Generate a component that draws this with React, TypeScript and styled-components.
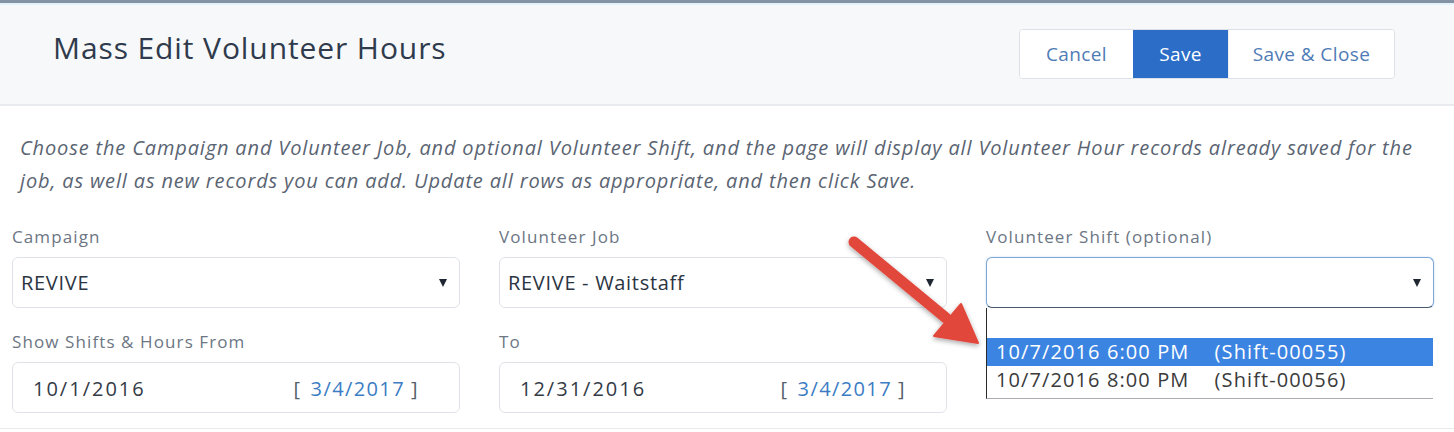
import React from "react";
import styled, { createGlobalStyle } from "styled-components";

const GlobalStyle = createGlobalStyle`
  html, body {
    margin: 0;
    padding: 0;
    background: #ffffff;
    font-family: "Open Sans", "Liberation Sans", sans-serif;
  }
`;

const Page = styled.div`
  position: relative;
  width: 1454px;
  height: 432px;
  overflow: hidden;
  background: #ffffff;
`;

const TopRule = styled.div`
  height: 3px;
  background: #8393a3;
  border-bottom: 2px solid #e3f1fb;
`;

const Header = styled.header`
  display: flex;
  align-items: flex-start;
  justify-content: space-between;
  height: 99px;
  padding: 0 59px 0 53px;
  background: #f7f8fa;
  border-bottom: 2px solid #e8eaee;
`;

const Title = styled.h1`
  margin: 0;
  padding-top: 25px;
  font-size: 30px;
  font-weight: 400;
  line-height: 36px;
  letter-spacing: 0.9px;
  color: #2f3b4c;
`;

const ButtonGroup = styled.div`
  display: flex;
  margin-top: 24px;
  border: 1px solid #dde1e7;
  border-radius: 4px;
  background: #ffffff;
  overflow: hidden;
`;

const GroupButton = styled.button<{ $primary?: boolean; $width: number }>`
  width: ${(p) => p.$width}px;
  height: 48px;
  padding: 0;
  border: none;
  border-left: ${(p) => (p.$primary ? "none" : "1px solid #eef0f3")};
  font-family: inherit;
  font-size: 19px;
  letter-spacing: 0.4px;
  color: ${(p) => (p.$primary ? "#ffffff" : "#4f7cb6")};
  background: ${(p) => (p.$primary ? "#2b6dc7" : "#ffffff")};
  &:first-child {
    border-left: none;
  }
`;

const Intro = styled.p`
  margin: 0;
  padding: 25px 20px 0 20px;
  font-size: 20px;
  font-style: italic;
  line-height: 33px;
  letter-spacing: 0.85px;
  white-space: nowrap;
  color: #5a6472;
`;

const Form = styled.div`
  display: grid;
  grid-template-columns: repeat(3, 448px);
  column-gap: 39px;
  row-gap: 23px;
  padding: 29px 0 15px 12px;
  border-bottom: 1px solid #e7e9ec;
`;

const Field = styled.div`
  position: relative;
  display: flex;
  flex-direction: column;
  gap: 9px;
`;

const Label = styled.label`
  font-size: 17px;
  line-height: 22px;
  letter-spacing: 1.1px;
  color: #6c7684;
`;

const Box = styled.div<{ $focused?: boolean }>`
  display: flex;
  align-items: center;
  box-sizing: border-box;
  height: 51px;
  padding: 0 12px 0 8px;
  border: 1px solid ${(p) => (p.$focused ? "#7ea6d6" : "#dfe3e8")};
  border-bottom-color: ${(p) => (p.$focused ? "#4a5a6e" : "#dfe3e8")};
  border-radius: 6px;
  background: #ffffff;
  box-shadow: ${(p) => (p.$focused ? "0 0 2px #b9d3f1" : "none")};
`;

const SelectValue = styled.span`
  flex: 1;
  font-size: 20px;
  font-weight: 500;
  letter-spacing: 0.7px;
  color: #2b3442;
`;

const Caret = styled.span`
  width: 0;
  height: 0;
  border-left: 4px solid transparent;
  border-right: 4px solid transparent;
  border-top: 8px solid #1f2733;
`;

const DateBox = styled(Box)`
  padding: 2px 40px 0 20px;
`;

const DateValue = styled.span`
  flex: 1;
  font-size: 20px;
  letter-spacing: 2px;
  color: #333b46;
`;

const Today = styled.span`
  font-size: 20px;
  color: #555f6b;
  letter-spacing: 1.4px;
`;

const TodayLink = styled.a`
  color: #3c7cc4;
  text-decoration: none;
  margin: 0 6px 0 9px;
`;

const ListBox = styled.ul`
  position: absolute;
  top: 82px;
  left: 0;
  width: 446px;
  margin: 0;
  padding: 2px 0 4px 0;
  list-style: none;
  background: #ffffff;
  border-left: 1px solid #2a2a2a;
  border-bottom: 1px solid #a9adb3;
`;

const Option = styled.li<{ $selected?: boolean }>`
  height: 28px;
  padding-left: 9px;
  font-size: 20px;
  line-height: 28px;
  letter-spacing: 1.1px;
  white-space: pre;
  color: ${(p) => (p.$selected ? "#ffffff" : "#3a3a3a")};
  background: ${(p) => (p.$selected ? "#3c84e1" : "transparent")};
`;

const ArrowLayer = styled.svg`
  position: absolute;
  left: 830px;
  top: 225px;
  pointer-events: none;
`;

function Select({ value, focused }: { value: string; focused?: boolean }) {
  return (
    <Box $focused={focused}>
      <SelectValue>{value}</SelectValue>
      <Caret />
    </Box>
  );
}

function DateInput({ value }: { value: string }) {
  return (
    <DateBox>
      <DateValue>{value}</DateValue>
      <Today>
        [<TodayLink href="#">3/4/2017</TodayLink>]
      </Today>
    </DateBox>
  );
}

function PointerArrow() {
  return (
    <ArrowLayer width="170" height="130" viewBox="0 0 170 130">
      <defs>
        <filter id="arrowShadow" x="-20%" y="-20%" width="140%" height="140%">
          <feDropShadow dx="0" dy="2" stdDeviation="2.5" floodColor="#000" floodOpacity="0.35" />
        </filter>
      </defs>
      <g filter="url(#arrowShadow)" fill="#e2463b" stroke="#e2463b">
        <line x1="24" y1="17" x2="116" y2="93" strokeWidth="11" strokeLinecap="round" />
        <polygon points="104,111 131,79 148,118" strokeWidth="2" strokeLinejoin="round" />
      </g>
    </ArrowLayer>
  );
}

export default function App() {
  return (
    <Page>
      <GlobalStyle />
      <TopRule />
      <Header>
        <Title>Mass Edit Volunteer Hours</Title>
        <ButtonGroup>
          <GroupButton $width={113}>Cancel</GroupButton>
          <GroupButton $primary $width={95}>
            Save
          </GroupButton>
          <GroupButton $width={166}>Save &amp; Close</GroupButton>
        </ButtonGroup>
      </Header>
      <Intro>
        Choose the Campaign and Volunteer Job, and optional Volunteer Shift, and the page will
        display all Volunteer Hour records already saved for the
        <br />
        job, as well as new records you can add. Update all rows as appropriate, and then click
        Save.
      </Intro>
      <Form>
        <Field>
          <Label>Campaign</Label>
          <Select value="REVIVE" />
        </Field>
        <Field>
          <Label>Volunteer Job</Label>
          <Select value="REVIVE - Waitstaff" />
        </Field>
        <Field>
          <Label>Volunteer Shift (optional)</Label>
          <Select value="" focused />
          <ListBox>
            <Option> </Option>
            <Option $selected>{"10/7/2016 6:00 PM    (Shift-00055)"}</Option>
            <Option>{"10/7/2016 8:00 PM    (Shift-00056)"}</Option>
          </ListBox>
        </Field>
        <Field>
          <Label>Show Shifts &amp; Hours From</Label>
          <DateInput value="10/1/2016" />
        </Field>
        <Field>
          <Label>To</Label>
          <DateInput value="12/31/2016" />
        </Field>
        <Field />
      </Form>
      <PointerArrow />
    </Page>
  );
}
